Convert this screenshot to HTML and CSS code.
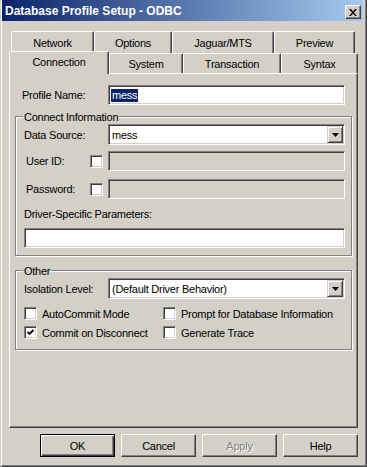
FILE: index.html
```html
<!DOCTYPE html>
<html lang="en">
<head>
    <meta charset="UTF-8">
    <title>Database Profile Setup - ODBC</title>
    <link rel="stylesheet" href="styles.css">
</head>
<body>

<div class="window">
    <div class="titleBar">
        <span class="titleText">Database Profile Setup - ODBC</span>
        <span class="closeBtn">
            <svg width="8" height="7" viewBox="0 0 8 7"><path d="M0 0h2l2 2.4L6 0h2L5 3.5 8 7H6L4 4.6 2 7H0l3-3.5z"/></svg>
        </span>
    </div>
    <div class="dialog">
        <div class="tabRow backRow">
            <div class="tab tabNetwork">Network</div>
            <div class="tab tabOptions">Options</div>
            <div class="tab tabJaguar">Jaguar/MTS</div>
            <div class="tab tabPreview">Preview</div>
        </div>
        <div class="tabRow frontRow">
            <div class="tab tabConnection active">Connection</div>
            <div class="tab tabSystem">System</div>
            <div class="tab tabTransaction">Transaction</div>
            <div class="tab tabSyntax">Syntax</div>
        </div>
        <div class="panel">
            <div class="profileRow">
                <span class="profileLabel">Profile Name:</span>
                <div class="field textField"><span class="selText">mess</span></div>
            </div>

            <div class="group">
                <div class="groupTitle">Connect Information</div>
                <div class="row">
                    <span class="rowLabel">Data Source:</span>
                    <div class="field combo">
                        <span>mess</span>
                        <span class="comboBtn"><svg width="7" height="4" viewBox="0 0 7 4"><path d="M0 0h7L3.5 4z"/></svg></span>
                    </div>
                </div>
                <div class="row rowUser">
                    <span class="rowLabel shortLabel">User ID:</span>
                    <span class="check field"></span>
                    <div class="field textField disabled"></div>
                </div>
                <div class="row rowPass">
                    <span class="rowLabel shortLabel">Password:</span>
                    <span class="check field"></span>
                    <div class="field textField disabled"></div>
                </div>
                <div class="paramLabel">Driver-Specific Parameters:</div>
                <div class="field textField wideField"></div>
            </div>

            <div class="group groupOther">
                <div class="groupTitle">Other</div>
                <div class="row">
                    <span class="rowLabel">Isolation Level:</span>
                    <div class="field combo">
                        <span>(Default Driver Behavior)</span>
                        <span class="comboBtn"><svg width="7" height="4" viewBox="0 0 7 4"><path d="M0 0h7L3.5 4z"/></svg></span>
                    </div>
                </div>
                <div class="checkGrid">
                    <div class="checkItem"><span class="check field"></span>AutoCommit Mode</div>
                    <div class="checkItem"><span class="check field"></span>Prompt for Database Information</div>
                    <div class="checkItem">
                        <span class="check field"><svg width="7" height="7" viewBox="0 0 7 7"><polyline points="0.5,3 2.5,5 6.5,1" fill="none" stroke="#000" stroke-width="1.8"/></svg></span>
                        Commit on Disconnect
                    </div>
                    <div class="checkItem"><span class="check field"></span>Generate Trace</div>
                </div>
            </div>
        </div>
        <div class="buttonRow">
            <div class="btn default">OK</div>
            <div class="btn">Cancel</div>
            <div class="btn disabledBtn">Apply</div>
            <div class="btn">Help</div>
        </div>
    </div>
</div>

</body>
</html>
```

FILE: styles.css
```css
body {
    margin: 0;
    font-family: "Liberation Sans", Arial, sans-serif;
    font-size: 11px;
    letter-spacing: -0.25px;
    color: #000;
    background-color: #d4d0c8;
}

.window {
    box-sizing: border-box;
    width: 367px;
    height: 467px;
    background-color: #d4d0c8;
    border-left: 1px solid #d4d0c8;
    border-right: 1px solid #404040;
    border-bottom: 1px solid #404040;
    box-shadow: inset 1px 0 #fff, inset -1px -1px #808080;
}

.titleBar {
    height: 21px;
    margin: 0 3px 0 1px;
    padding: 0 2px 0 3px;
    display: flex;
    justify-content: space-between;
    background: linear-gradient(to right, #0a246a, #a6caf0);
}

.titleText {
    color: #fff;
    font-weight: bold;
    font-size: 12px;
    letter-spacing: 0;
    line-height: 19px;
    padding-top: 2px;
}

.closeBtn {
    box-sizing: border-box;
    width: 16px;
    height: 14px;
    margin-top: 5px;
    background-color: #d4d0c8;
    border: 1px solid;
    border-color: #fff #404040 #404040 #fff;
    box-shadow: inset -1px -1px #808080;
    display: flex;
    align-items: center;
    justify-content: center;
}

.dialog {
    padding: 10px 0 0 8px;
}

/* tabs */
.tabRow {
    display: flex;
}

.backRow {
    height: 22px;
    padding-left: 2px;
}

.frontRow {
    height: 20px;
    align-items: flex-end;
}

.tab {
    box-sizing: border-box;
    height: 100%;
    background-color: #d4d0c8;
    border-top: 1px solid #fff;
    border-left: 1px solid #fff;
    border-right: 1px solid #404040;
    box-shadow: inset -1px 0 #808080;
    border-top-left-radius: 2px;
    border-top-right-radius: 2px;
    display: flex;
    align-items: center;
    justify-content: center;
}

.active {
    height: 23px;
    margin-bottom: -1px;
    padding-bottom: 2px;
    position: relative;
    z-index: 1;
}

.tabNetwork { width: 83px; }
.tabOptions { width: 78px; }
.tabJaguar { width: 102px; }
.tabPreview { width: 81px; }
.tabConnection { width: 100px; }
.tabSystem { width: 74px; }
.tabTransaction { width: 98px; }
.tabSyntax { width: 77px; }

/* panel */
.panel {
    box-sizing: border-box;
    width: 349px;
    height: 355px;
    border-top: 1px solid #fff;
    border-left: 1px solid #fff;
    border-right: 1px solid #404040;
    border-bottom: 1px solid #404040;
    box-shadow: inset -1px -1px #808080;
    padding: 11px 5px 0 5px;
}

.profileRow {
    display: flex;
    align-items: center;
    height: 20px;
}

.profileLabel {
    width: 86px;
    margin-left: 7px;
}

.field {
    box-sizing: border-box;
    border: 1px solid;
    border-color: #808080 #fff #fff #808080;
    box-shadow: inset 1px 1px #404040, inset -1px -1px #d4d0c8;
    background-color: #fff;
}

.textField {
    width: 237px;
    height: 20px;
    padding: 0 3px;
    display: flex;
    align-items: center;
}

.selText {
    background-color: #0a246a;
    color: #fff;
    line-height: 13px;
    padding: 0 1px;
    margin-left: -1px;
}

.disabled {
    background-color: #d4d0c8;
}

.wideField {
    width: 321px;
    margin-top: 7px;
}

.group {
    border: 1px solid #808080;
    box-shadow: inset 1px 1px #fff, 1px 1px #fff;
    padding: 0 6px 7px 8px;
    margin-top: 11px;
}

.groupOther {
    margin-top: 14px;
}

.groupTitle {
    width: fit-content;
    height: 14px;
    line-height: 14px;
    margin: -7px 0 0 -1px;
    padding: 0 1px;
    background-color: #d4d0c8;
}

.row {
    display: flex;
    align-items: center;
}

.rowLabel {
    width: 84px;
}

.shortLabel {
    box-sizing: border-box;
    width: 66px;
    padding-left: 2px;
}

.rowUser {
    margin-top: 6px;
}

.rowPass {
    margin-top: 8px;
}

.combo {
    width: 237px;
    height: 21px;
    padding-left: 3px;
    display: flex;
    align-items: center;
    justify-content: space-between;
}

.comboBtn {
    box-sizing: border-box;
    width: 16px;
    height: 17px;
    margin-right: 1px;
    background-color: #d4d0c8;
    border: 1px solid;
    border-color: #d4d0c8 #404040 #404040 #d4d0c8;
    box-shadow: inset 1px 1px #fff, inset -1px -1px #808080;
    display: flex;
    align-items: center;
    justify-content: center;
}

.paramLabel {
    margin-top: 8px;
    line-height: 14px;
}

.check {
    flex: none;
    width: 13px;
    height: 13px;
    margin-right: 5px;
    display: flex;
    align-items: center;
    justify-content: center;
}

.checkGrid {
    margin-top: 5px;
    display: grid;
    grid-template-columns: 139px 1fr;
    grid-auto-rows: 19px;
    align-items: center;
}

.checkItem {
    display: flex;
    align-items: center;
}

/* buttons */
.buttonRow {
    width: 349px;
    margin-top: 6px;
    display: flex;
    justify-content: flex-end;
    gap: 6px;
}

.btn {
    box-sizing: border-box;
    width: 75px;
    height: 23px;
    border: 1px solid;
    border-color: #fff #404040 #404040 #fff;
    box-shadow: inset -1px -1px #808080;
    display: flex;
    align-items: center;
    justify-content: center;
}

.default {
    border-color: #000;
    box-shadow: inset 1px 1px #fff, inset -1px -1px #404040, inset -2px -2px #808080;
}

.disabledBtn {
    color: #808080;
    text-shadow: 1px 1px #fff;
}
```
